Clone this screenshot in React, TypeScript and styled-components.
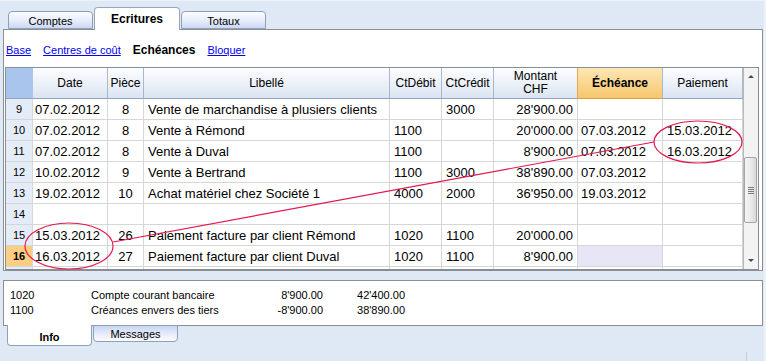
import React from "react";
import styled, { createGlobalStyle } from "styled-components";

const GlobalStyle = createGlobalStyle`
  html, body {
    margin: 0;
    padding: 0;
    background: #dfe8f5;
  }
  body {
    font-family: "Liberation Sans", Arial, sans-serif;
    color: #000;
  }
`;

type Row = {
  num: number | "";
  date: string;
  piece: string;
  libelle: string;
  debit: string;
  credit: string;
  montant: string;
  echeance: string;
  paiement: string;
  current?: boolean;
};

const rows: Row[] = [
  { num: 9, date: "07.02.2012", piece: "8", libelle: "Vente de marchandise à plusiers clients", debit: "", credit: "3000", montant: "28'900.00", echeance: "", paiement: "" },
  { num: 10, date: "07.02.2012", piece: "8", libelle: "Vente à Rémond", debit: "1100", credit: "", montant: "20'000.00", echeance: "07.03.2012", paiement: "15.03.2012" },
  { num: 11, date: "07.02.2012", piece: "8", libelle: "Vente à Duval", debit: "1100", credit: "", montant: "8'900.00", echeance: "07.03.2012", paiement: "16.03.2012" },
  { num: 12, date: "10.02.2012", piece: "9", libelle: "Vente à Bertrand", debit: "1100", credit: "3000", montant: "38'890.00", echeance: "07.03.2012", paiement: "" },
  { num: 13, date: "19.02.2012", piece: "10", libelle: "Achat matériel chez Société 1", debit: "4000", credit: "2000", montant: "36'950.00", echeance: "19.03.2012", paiement: "" },
  { num: 14, date: "", piece: "", libelle: "", debit: "", credit: "", montant: "", echeance: "", paiement: "" },
  { num: 15, date: "15.03.2012", piece: "26", libelle: "Paiement facture par client Rémond", debit: "1020", credit: "1100", montant: "20'000.00", echeance: "", paiement: "" },
  { num: 16, date: "16.03.2012", piece: "27", libelle: "Paiement facture par client Duval", debit: "1020", credit: "1100", montant: "8'900.00", echeance: "", paiement: "", current: true },
  // only the top edge of the next row shows
  { num: "", date: "", piece: "", libelle: "", debit: "", credit: "", montant: "", echeance: "", paiement: "" },
];

const infoRows = [
  { code: "1020", label: "Compte courant bancaire", a: "8'900.00", b: "42'400.00" },
  { code: "1100", label: "Créances envers des tiers", a: "-8'900.00", b: "38'890.00" },
];

export default function App() {
  return (
    <Page>
      <GlobalStyle />
      <TopTabs>
        <TopTab>Comptes</TopTab>
        <TopTab $active>Ecritures</TopTab>
        <TopTab>Totaux</TopTab>
      </TopTabs>

      <Panel>
        <LinkBar>
          <Link>Base</Link>
          <Link>Centres de coût</Link>
          <CurrentLink>Echéances</CurrentLink>
          <Link>Bloquer</Link>
        </LinkBar>

        <GridFrame>
          <Table>
            <HeaderCell $variant="corner" />
            <HeaderCell>Date</HeaderCell>
            <HeaderCell>Pièce</HeaderCell>
            <HeaderCell>Libellé</HeaderCell>
            <HeaderCell>CtDébit</HeaderCell>
            <HeaderCell>CtCrédit</HeaderCell>
            <HeaderCell>
              Montant
              <br />
              CHF
            </HeaderCell>
            <HeaderCell $variant="active">Échéance</HeaderCell>
            <HeaderCell>Paiement</HeaderCell>

            {rows.map((r, i) => (
              <React.Fragment key={i}>
                <NumCell $current={r.current}>{r.num}</NumCell>
                <Cell $pad="0 0 0 2px">{r.date}</Cell>
                <Cell $align="center">{r.piece}</Cell>
                <Cell>{r.libelle}</Cell>
                <Cell>{r.debit}</Cell>
                <Cell>{r.credit}</Cell>
                <Cell $align="right">{r.montant}</Cell>
                <Cell $pad="0 0 0 3px" $selected={r.current}>
                  {r.echeance}
                </Cell>
                <Cell>{r.paiement}</Cell>
              </React.Fragment>
            ))}
          </Table>

          <Scrollbar>
            <ArrowButton>
              <ArrowUp />
            </ArrowButton>
            <TrackGap />
            <Thumb>
              <Grip />
              <Grip />
              <Grip />
              <Grip />
            </Thumb>
            <TrackRest />
            <ArrowButton>
              <ArrowDown />
            </ArrowButton>
          </Scrollbar>
        </GridFrame>
      </Panel>

      <InfoBox>
        {infoRows.map((r) => (
          <InfoRow key={r.code}>
            <span>{r.code}</span>
            <span>{r.label}</span>
            <Amount>{r.a}</Amount>
            <Amount>{r.b}</Amount>
          </InfoRow>
        ))}
      </InfoBox>

      <BottomTabs>
        <BottomTab $active>Info</BottomTab>
        <BottomTab>Messages</BottomTab>
      </BottomTabs>

      <StatusBar>
        <StatusSep />
      </StatusBar>

      <Marks width="766" height="361" viewBox="0 0 766 361">
        <ellipse cx="698" cy="141" rx="44" ry="21" />
        <ellipse cx="69" cy="245" rx="44" ry="23" />
        <line x1="113" y1="241" x2="654" y2="141" />
      </Marks>
    </Page>
  );
}

const Page = styled.div`
  position: relative;
  width: 766px;
  height: 361px;
  overflow: hidden;
  box-sizing: border-box;
  border-top: 1px solid #eef3fa;
  border-right: 2px solid #eef3fa;
  display: flex;
  flex-direction: column;
`;

const TopTabs = styled.div`
  display: flex;
  align-items: flex-end;
  gap: 1px;
  height: 28px;
  padding-left: 8px;
  position: relative;
  z-index: 2;
`;

const TopTab = styled.div<{ $active?: boolean }>`
  box-sizing: border-box;
  width: ${(p) => (p.$active ? "86px" : "85px")};
  height: ${(p) => (p.$active ? "23px" : "18px")};
  margin-bottom: ${(p) => (p.$active ? "-1px" : "0")};
  border: 1px solid ${(p) => (p.$active ? "#9aa6b8" : "#8fa0bb")};
  border-bottom: ${(p) => (p.$active ? "none" : "1px solid #8fa0bb")};
  border-radius: 4px 4px 0 0;
  background: ${(p) =>
    p.$active ? "#fff" : "linear-gradient(#fdfdff, #e6ecfb 55%, #ccd8f3)"};
  display: flex;
  justify-content: center;
  align-items: center;
  font-size: ${(p) => (p.$active ? "12px" : "11px")};
  font-weight: ${(p) => (p.$active ? "bold" : "normal")};
  padding-top: ${(p) => (p.$active ? "0" : "1px")};
`;

const Panel = styled.div`
  margin: 0 0 0 3px;
  width: 760px;
  height: 242px;
  box-sizing: border-box;
  border: 1px solid #8e8e8e;
  background: #fff;
  padding: 0 1px;
  display: flex;
  flex-direction: column;
`;

const LinkBar = styled.div`
  height: 37px;
  display: flex;
  align-items: center;
  gap: 12px;
  padding: 3px 0 0 1px;
  box-sizing: border-box;
  font-size: 11px;
`;

const Link = styled.span`
  color: #0000ee;
  text-decoration: underline;
`;

const CurrentLink = styled.span`
  font-weight: bold;
  font-size: 12px;
`;

const GridFrame = styled.div`
  display: flex;
  width: 754px;
  height: 203px;
  box-sizing: border-box;
  border: 1px solid #868e98;
  overflow: hidden;
`;

const Table = styled.div`
  display: grid;
  grid-template-columns: 27px 75px 36px 246px 52px 52px 84px 85px 80px;
  grid-auto-rows: 21px;
  grid-template-rows: 31px;
  width: 737px;
  font-size: 13px;
`;

const HeaderCell = styled.div<{ $variant?: "corner" | "active" }>`
  box-sizing: border-box;
  border-right: 1px solid ${(p) => (p.$variant === "corner" ? "#a9c5ed" : "#a8b8ce")};
  border-bottom: 1px solid ${(p) => (p.$variant === "active" ? "#e0a040" : "#90a4c0")};
  ${(p) =>
    p.$variant === "active" ? "border-left: 1px solid #e8a850; margin-left: -1px;" : ""}
  background: ${(p) =>
    p.$variant === "corner"
      ? "#a9c5ed"
      : p.$variant === "active"
      ? "linear-gradient(#fde7b4, #f8c66e)"
      : "linear-gradient(#fcfdfe, #e9eff8 60%, #dbe4f1)"};
  font-size: 12px;
  font-weight: ${(p) => (p.$variant === "active" ? "bold" : "normal")};
  line-height: 13px;
  display: flex;
  align-items: center;
  justify-content: center;
  text-align: center;
`;

const NumCell = styled.div<{ $current?: boolean }>`
  box-sizing: border-box;
  border-right: 1px solid #d4d9e0;
  border-bottom: 1px solid #d6d6d6;
  background: ${(p) => (p.$current ? "#fbcf83" : "#e4ecf7")};
  font-size: 11px;
  font-weight: ${(p) => (p.$current ? "bold" : "normal")};
  display: flex;
  align-items: center;
  justify-content: center;
`;

const Cell = styled.div<{
  $align?: "left" | "center" | "right";
  $pad?: string;
  $selected?: boolean;
}>`
  box-sizing: border-box;
  border-right: 1px solid #d6d6d6;
  border-bottom: 1px solid #d6d6d6;
  background: ${(p) => (p.$selected ? "#e6e6f6" : "#fff")};
  display: flex;
  align-items: center;
  justify-content: ${(p) =>
    p.$align === "center" ? "center" : p.$align === "right" ? "flex-end" : "flex-start"};
  padding: ${(p) => p.$pad ?? (p.$align === "right" ? "0 4px 0 0" : p.$align === "center" ? "0" : "0 0 0 4px")};
  white-space: nowrap;
  overflow: hidden;
`;

const Scrollbar = styled.div`
  width: 15px;
  box-sizing: border-box;
  border-left: 1px solid #b8b8b8;
  background: #f3f3f3;
  display: flex;
  flex-direction: column;
`;

const ArrowButton = styled.div`
  height: 17px;
  display: flex;
  align-items: center;
  justify-content: center;
`;

const ArrowUp = styled.div`
  width: 0;
  height: 0;
  border-left: 3px solid transparent;
  border-right: 3px solid transparent;
  border-bottom: 3px solid #4a4a4a;
`;

const ArrowDown = styled(ArrowUp)`
  border-bottom: none;
  border-top: 3px solid #4a4a4a;
`;

const TrackGap = styled.div`
  height: 72px;
`;

const TrackRest = styled.div`
  flex: 1;
`;

const Thumb = styled.div`
  height: 66px;
  margin: 0 1px 0 0;
  box-sizing: border-box;
  border: 1px solid #a2a6ac;
  border-radius: 2px;
  background: linear-gradient(90deg, #f6f6f6, #e8e8e8 60%, #d8d8d8);
  display: flex;
  flex-direction: column;
  align-items: center;
  justify-content: center;
  gap: 1px;
`;

const Grip = styled.div`
  width: 6px;
  height: 1px;
  background: #7a7a7a;
`;

const InfoBox = styled.div`
  margin: 9px 0 0 3px;
  width: 760px;
  height: 46px;
  box-sizing: border-box;
  border: 1px solid #8e8e8e;
  background: #fff;
  padding: 7px 0 0 6px;
  font-size: 11px;
`;

const InfoRow = styled.div`
  display: grid;
  grid-template-columns: 81px 169px 63px 82px;
  line-height: 15px;
`;

const Amount = styled.span`
  text-align: right;
`;

const BottomTabs = styled.div`
  display: flex;
  align-items: flex-start;
  gap: 1px;
  padding-left: 7px;
  margin-top: -1px;
  height: 21px;
`;

const BottomTab = styled.div<{ $active?: boolean }>`
  box-sizing: border-box;
  width: 85px;
  height: ${(p) => (p.$active ? "21px" : "17px")};
  border: 1px solid #8fa0bb;
  border-top: ${(p) => (p.$active ? "none" : "1px solid #8fa0bb")};
  border-radius: 0 0 4px 4px;
  background: ${(p) =>
    p.$active ? "#fff" : "linear-gradient(#c9d6f2, #e8eefb 60%, #fdfdff)"};
  display: flex;
  justify-content: center;
  align-items: center;
  font-size: 11px;
  font-weight: ${(p) => (p.$active ? "bold" : "normal")};
  padding-top: ${(p) => (p.$active ? "3px" : "0")};
`;

const StatusBar = styled.div`
  flex: 1;
  display: flex;
  justify-content: flex-end;
  align-items: flex-end;
  padding-right: 17px;
`;

const StatusSep = styled.div`
  width: 1px;
  height: 9px;
  background: #c4ccd8;
`;

const Marks = styled.svg`
  position: absolute;
  left: 0;
  top: 0;
  pointer-events: none;
  fill: none;
  stroke: #e4184e;
  stroke-width: 1.2;
`;
